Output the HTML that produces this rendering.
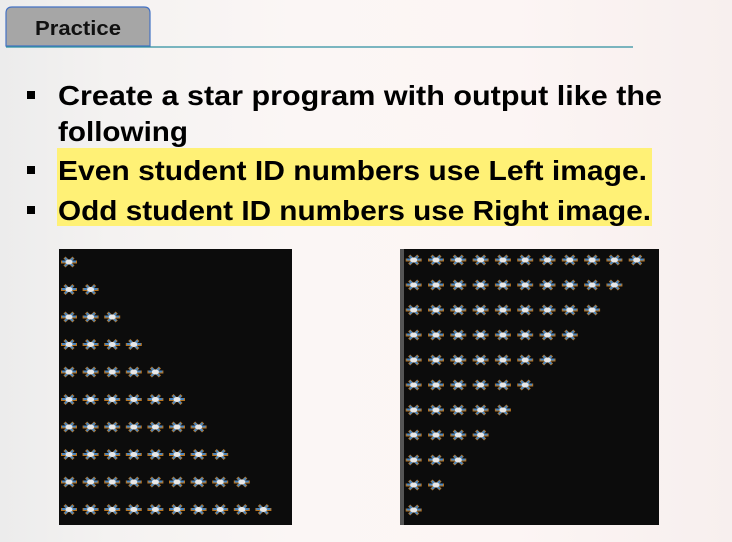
<!DOCTYPE html>
<html><head><style>
html,body{margin:0;padding:0;}
body{width:732px;height:542px;overflow:hidden;background:linear-gradient(90deg,#ececec 0%,#f4f2f1 15%,#fbf6f5 40%,#fcf5f4 70%,#f7efee 100%);}
</style></head><body>
<svg width="732" height="542" xmlns="http://www.w3.org/2000/svg" style="display:block">
<defs>
<g id="st">
<path d="M-8 0H8M-4.5 -4.5L4.5 4.5M-4.5 4.5L4.5 -4.5" stroke="#b87420" stroke-width="3"/>
<path d="M-7 -0.5H7M-4 -4L4 4M-4 4L4 -4" stroke="#4a86c0" stroke-width="2"/>
<ellipse rx="3.5" ry="2.5" fill="#e8e8e8"/>
</g>
</defs>
<path d="M6 46V13Q6 7 12 7H144Q150 7 150 13V46Z" fill="#a6a6a6" stroke="#4472c4" stroke-width="1.2"/>
<line x1="6" y1="47" x2="633" y2="47" stroke="#2e8fa0" stroke-width="1.3"/>
<text x="78" y="35" font-family="Liberation Sans, sans-serif" font-size="20" font-weight="bold" text-anchor="middle" fill="#111" textLength="86" lengthAdjust="spacingAndGlyphs">Practice</text>
<rect x="57" y="148" width="595" height="78" fill="#fff176"/>
<g fill="#000">
<rect x="27" y="91" width="8" height="8"/><rect x="27" y="166" width="8" height="8"/><rect x="27" y="206" width="8" height="8"/>
</g>
<g font-family="Liberation Sans, sans-serif" font-size="28" font-weight="bold" fill="#000">
<text x="58" y="105" textLength="604" lengthAdjust="spacingAndGlyphs">Create a star program with output like the</text>
<text x="58" y="141" textLength="130" lengthAdjust="spacingAndGlyphs">following</text>
<text x="58" y="180" textLength="589" lengthAdjust="spacingAndGlyphs">Even student ID numbers use Left image.</text>
<text x="58" y="220" textLength="593" lengthAdjust="spacingAndGlyphs">Odd student ID numbers use Right image.</text>
</g>
<rect x="59" y="249" width="233" height="276" fill="#0c0c0c"/>
<rect x="400" y="249" width="259" height="276" fill="#0c0c0c"/>
<rect x="400" y="249" width="4" height="276" fill="#555"/>
<g id="L"></g><g id="R"></g>
</svg>
<script>
var ns="http://www.w3.org/2000/svg";
var L=document.getElementById("L"),R=document.getElementById("R");
function add(g,x,y){var u=document.createElementNS(ns,"use");u.setAttribute("href","#st");u.setAttribute("x",x);u.setAttribute("y",y);g.appendChild(u);}
for(var r=0;r<10;r++)for(var c=0;c<=r;c++)add(L,69+c*21.6,262+r*27.5);
for(var r=0;r<11;r++)for(var c=0;c<11-r;c++)add(R,413.7+c*22.3,260+r*25);
</script>
</body></html>
